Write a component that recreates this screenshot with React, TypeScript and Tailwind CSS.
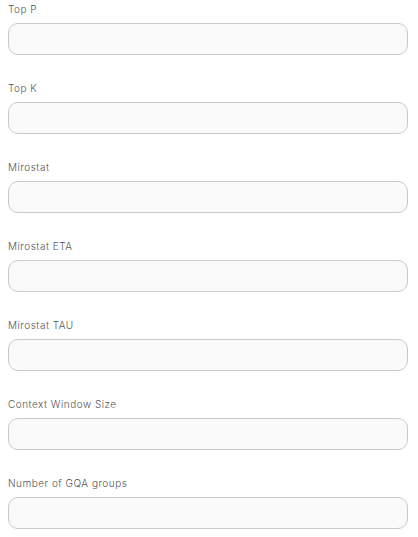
const fields = [
  "Top P",
  "Top K",
  "Mirostat",
  "Mirostat ETA",
  "Mirostat TAU",
  "Context Window Size",
  "Number of GQA groups",
]

export default function App() {
  return (
    <div className="min-h-screen bg-white pl-2 pr-[10px] pt-[2px] font-['Inter',sans-serif]">
      <div className="flex flex-col gap-[26px]">
        {fields.map((label) => (
          <div key={label} className="flex flex-col">
            <label className="text-[10px] font-light leading-[14px] tracking-[0.05em] text-[#555555]">
              {label}
            </label>
            <input
              type="text"
              className="mt-[7px] h-8 w-full rounded-[10px] border border-[#c9c9c9] bg-[#fafafa] px-3 text-xs outline-none"
            />
          </div>
        ))}
      </div>
    </div>
  )
}
